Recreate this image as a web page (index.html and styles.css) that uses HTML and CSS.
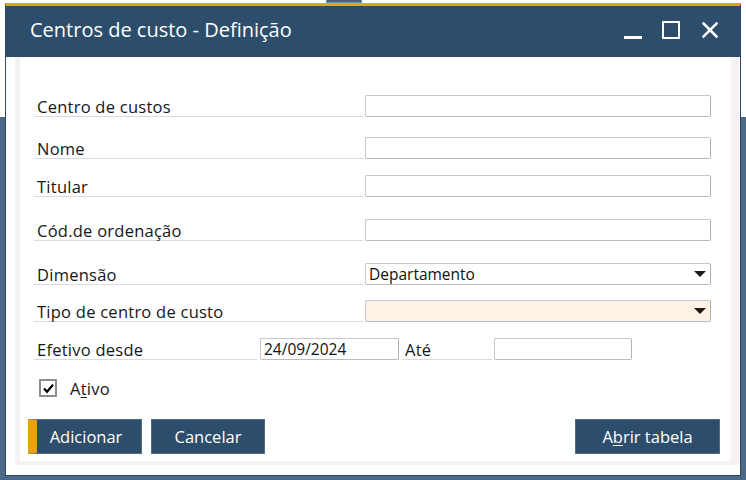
FILE: index.html
```html
<!DOCTYPE html>
<html lang="pt">
<head>
<meta charset="utf-8">
<title>Centros de custo - Definição</title>
<link rel="stylesheet" href="styles.css">
</head>
<body>
<div class="desktop">
  <div class="bg-tab"></div>
  <div class="window">
    <div class="titlebar">
      <span class="title">Centros de custo - Definição</span>
      <div class="controls">
        <svg class="ctl ctl-min" width="18" height="18" viewBox="0 0 18 18"><rect x="0" y="15" width="18" height="3" fill="#fff"/></svg>
        <svg class="ctl ctl-max" width="18" height="18" viewBox="0 0 18 18"><rect x="1" y="1" width="16" height="16" fill="none" stroke="#fff" stroke-width="2"/></svg>
        <svg class="ctl ctl-close" width="16" height="18" viewBox="0 0 16 18"><path d="M1.5 2.5 L14.5 15.5 M14.5 2.5 L1.5 15.5" stroke="#fff" stroke-width="2.6" stroke-linecap="square"/></svg>
      </div>
    </div>
    <div class="wbody">
      <div class="frame">
        <div class="row">
          <span class="lbl">Centro de custos</span>
          <div class="inp"></div>
        </div>
        <div class="row gap-20">
          <span class="lbl">Nome</span>
          <div class="inp"></div>
        </div>
        <div class="row gap-16">
          <span class="lbl">Titular</span>
          <div class="inp"></div>
        </div>
        <div class="row gap-22">
          <span class="lbl">Cód.de ordenação</span>
          <div class="inp"></div>
        </div>
        <div class="row gap-22">
          <span class="lbl">Dimensão</span>
          <div class="inp sel"><span class="val">Departamento</span><span class="arrow"></span></div>
        </div>
        <div class="row gap-15">
          <span class="lbl">Tipo de centro de custo</span>
          <div class="inp sel req"><span class="val"></span><span class="arrow"></span></div>
        </div>
        <div class="row gap-16">
          <span class="lbl lbl-short">Efetivo desde</span>
          <div class="inp inp-date"><span class="val">24/09/2024</span></div>
          <span class="lbl lbl-ate">Até</span>
          <div class="inp inp-date2"></div>
        </div>
        <div class="check-row">
          <span class="checkbox">
            <svg width="13" height="13" viewBox="0 0 13 13"><path d="M2 6.5 L5 9.8 L11 2.8" fill="none" stroke="#000" stroke-width="2.2"/></svg>
          </span>
          <span class="check-lbl">A<u>t</u>ivo</span>
        </div>
        <div class="buttons">
          <button class="btn btn-primary">Adicionar</button>
          <button class="btn btn-cancel">Cancelar</button>
          <button class="btn btn-table">A<u>b</u>rir tabela</button>
        </div>
      </div>
    </div>
  </div>
</div>
</body>
</html>
```

FILE: styles.css
```css
html, body {
  margin: 0;
  padding: 0;
}
body {
  width: 746px;
  height: 480px;
  overflow: hidden;
  background: linear-gradient(to bottom, #ffffff 0, #ffffff 117px, #4c6987 117px, #4c6987 100%);
  font-family: "Open Sans", "Noto Sans", sans-serif;
}
.desktop {
  display: flex;
  flex-direction: column;
}
.bg-tab {
  margin-left: 326px;
  width: 36px;
  height: 3px;
  background: #4a6180;
  box-sizing: border-box;
  border: 1px solid #7d8ea3;
  border-top: none;
}
.window {
  margin-left: 5px;
  width: 736px;
  height: 473px;
  box-sizing: border-box;
  border-top: 3px solid #e9a20f;
  border-left: 1px solid #2a4866;
  border-right: 1px solid #2a4866;
  border-bottom: 1px solid #2a4866;
  display: flex;
  flex-direction: column;
  background: #fff;
}
.titlebar {
  height: 51px;
  flex: none;
  background: #2c4d6b;
  display: flex;
  align-items: flex-start;
  padding-left: 24px;
  box-sizing: border-box;
}
.title {
  color: #fff;
  font-size: 20px;
  line-height: 24px;
  margin-top: 12px;
}
.controls {
  margin-left: auto;
  margin-right: 22px;
  margin-top: 15px;
  display: flex;
  align-items: flex-start;
}
.ctl { display: block; }
.ctl-max { margin-left: 20px; }
.ctl-close { margin-left: 22px; }

.wbody {
  flex: 1;
  display: flex;
  padding: 0 1px 10px 9px;
  background: #fff;
}
.frame {
  flex: 1;
  border-left: 5px solid #f5f1f5;
  border-right: 8px solid #f5f1f5;
  border-bottom: 4px solid #f5f1f5;
  background: #fff;
  padding: 38px 0 0 14px;
  display: flex;
  flex-direction: column;
}
.row {
  display: flex;
  align-items: flex-end;
  height: 22px;
}
.gap-15 { margin-top: 15px; }
.gap-16 { margin-top: 16px; }
.gap-20 { margin-top: 20px; }
.gap-22 { margin-top: 22px; }
.lbl {
  width: 329px;
  box-sizing: border-box;
  padding-left: 3px;
  border-bottom: 1px solid #d7dadf;
  font-size: 16.5px;
  letter-spacing: 0.25px;
  line-height: 19px;
  color: #161616;
  white-space: nowrap;
}
.lbl-short { width: 223px; }
.lbl-ate {
  width: 90px;
  margin-left: 3px;
}
.inp {
  margin-left: 2px;
  width: 346px;
  height: 22px;
  box-sizing: border-box;
  border: 1px solid #c5c9ce;
  border-right-color: #aeb2b7;
  border-bottom-color: #b9bdc2;
  border-radius: 2px;
  background: #fff;
  display: flex;
  align-items: center;
  font-size: 15.5px;
  color: #111;
}
.val {
  padding-left: 3px;
  line-height: 19px;
}
.sel { justify-content: space-between; }
.req { background: #fdf3e5; }
.arrow {
  width: 0;
  height: 0;
  border-left: 6px solid transparent;
  border-right: 6px solid transparent;
  border-top: 6px solid #1a1a1a;
  margin-right: 4px;
}
.inp-date {
  margin-left: 3px;
  width: 139px;
}
.inp-date2 {
  margin-left: 2px;
  width: 138px;
}
.check-row {
  margin-top: 19px;
  display: flex;
  align-items: center;
  height: 18px;
}
.checkbox {
  margin-left: 5px;
  width: 18px;
  height: 18px;
  box-sizing: border-box;
  border: 2px solid #8a8d91;
  background: #fff;
  display: flex;
  align-items: center;
  justify-content: center;
}
.checkbox svg { display: block; }
.check-lbl {
  margin-left: 13px;
  font-size: 16.5px;
  letter-spacing: 0.25px;
  color: #161616;
  line-height: 19px;
}
.check-lbl u, .btn u {
  text-decoration-thickness: 1px;
  text-underline-offset: 2px;
}
.buttons {
  margin-top: 22px;
  margin-left: -6px;
  display: flex;
}
.btn {
  height: 35px;
  width: 114px;
  box-sizing: border-box;
  background: #2c4d6b;
  border: 1px solid #4f6d8b;
  color: #fff;
  font-family: "Open Sans", "Noto Sans", sans-serif;
  font-size: 16.5px;
  padding: 0;
  margin: 0;
}
.btn-primary {
  border-left: 9px solid #e9a20f;
  padding-right: 6px;
}
.btn-cancel { margin-left: 9px; }
.btn-table {
  margin-left: auto;
  margin-right: 11px;
  width: 145px;
}
```
